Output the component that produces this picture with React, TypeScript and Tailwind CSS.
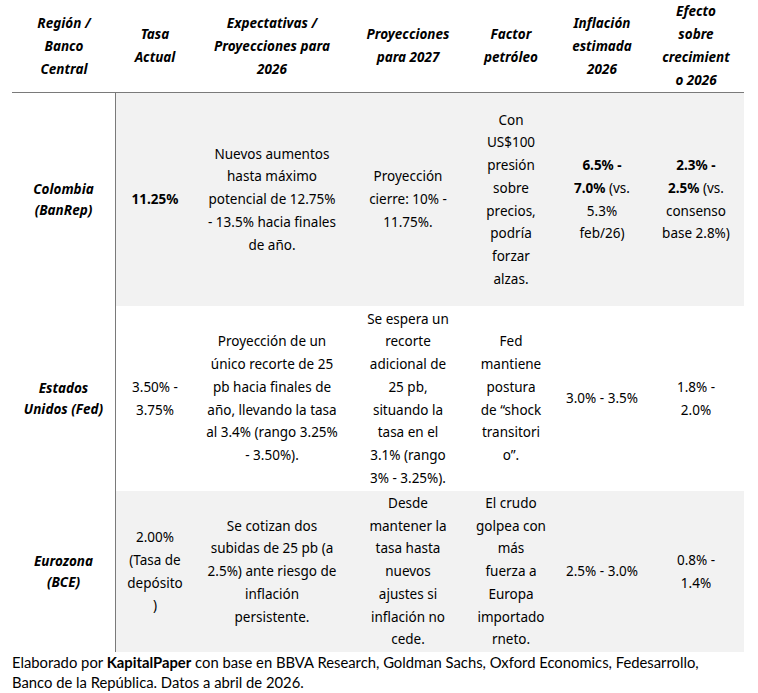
import React from "react";

type Cell = React.ReactNode[];

const header: Cell[] = [
  ["Región /", "Banco", "Central"],
  ["Tasa", "Actual"],
  ["Expectativas /", "Proyecciones para", "2026"],
  ["Proyecciones", "para 2027"],
  ["Factor", "petróleo"],
  ["Inflación", "estimada", "2026"],
  ["Efecto", "sobre", "crecimient", "o 2026"],
];

const rows: { region: string[]; cells: Cell[]; shaded: boolean; h: string }[] = [
  {
    region: ["Colombia", "(BanRep)"],
    shaded: true,
    h: "h-[213px]",
    cells: [
      [<b key="b">11.25%</b>],
      ["Nuevos aumentos", "hasta máximo", "potencial de 12.75%", "- 13.5% hacia finales", "de año."],
      ["Proyección", "cierre: 10% -", "11.75%."],
      ["Con", "US$100", "presión", "sobre", "precios,", "podría", "forzar", "alzas."],
      [
        <b key="b">6.5% -</b>,
        <>
          <b>7.0%</b> (vs.
        </>,
        "5.3%",
        "feb/26)",
      ],
      [
        <b key="b">2.3% -</b>,
        <>
          <b>2.5%</b> (vs.
        </>,
        "consenso",
        "base 2.8%)",
      ],
    ],
  },
  {
    region: ["Estados", "Unidos (Fed)"],
    shaded: false,
    h: "h-[185px]",
    cells: [
      ["3.50% -", "3.75%"],
      [
        "Proyección de un",
        "único recorte de 25",
        "pb hacia finales de",
        "año, llevando la tasa",
        "al 3.4% (rango 3.25%",
        "- 3.50%).",
      ],
      ["Se espera un", "recorte", "adicional de", "25 pb,", "situando la", "tasa en el", "3.1% (rango", "3% - 3.25%)."],
      ["Fed", "mantiene", "postura", "de “shock", "transitori", "o”."],
      ["3.0% - 3.5%"],
      ["1.8% -", "2.0%"],
    ],
  },
  {
    region: ["Eurozona", "(BCE)"],
    shaded: true,
    h: "h-[161px]",
    cells: [
      ["2.00%", "(Tasa de", "depósito", ")"],
      ["Se cotizan dos", "subidas de 25 pb (a", "2.5%) ante riesgo de", "inflación", "persistente."],
      ["Desde", "mantener la", "tasa hasta", "nuevos", "ajustes si", "inflación no", "cede."],
      ["El crudo", "golpea con", "más", "fuerza a", "Europa", "importado", "rneto."],
      ["2.5% - 3.0%"],
      ["0.8% -", "1.4%"],
    ],
  },
];

const cols = "grid grid-cols-[104px_78px_156px_116px_90px_92px_96px]";

const Lines = ({ lines }: { lines: React.ReactNode[] }) => (
  <div className="flex flex-col items-center text-center">
    {lines.map((l, i) => (
      <span key={i} className="whitespace-nowrap">
        {l}
      </span>
    ))}
  </div>
);

export default function App() {
  return (
    <div className="w-[758px] h-[693px] bg-white text-black overflow-hidden">
      <div className="ml-3 w-[732px] font-['Noto_Sans',sans-serif] text-[13.5px]">
        <div className={`${cols} h-[93px] border-b border-[#7a7a7a] font-bold italic leading-[23px]`}>
          {header.map((c, i) => (
            <div key={i} className="flex items-center justify-center">
              <Lines lines={c} />
            </div>
          ))}
        </div>
        {rows.map((r, ri) => (
          <div key={ri} className={`${cols} ${r.h} ${r.shaded ? "bg-[#f2f2f2]" : "bg-white"} leading-[22.7px]`}>
            <div className="flex items-center justify-center bg-white border-r border-[#7a7a7a] font-bold italic leading-[21px]">
              <Lines lines={r.region} />
            </div>
            {r.cells.map((c, ci) => (
              <div key={ci} className="flex items-center justify-center">
                <Lines lines={c} />
              </div>
            ))}
          </div>
        ))}
      </div>
      <p className="ml-3 mt-px font-['Lato',sans-serif] text-[14.8px] leading-[19.5px]">
        Elaborado por <b>KapitalPaper</b> con base en BBVA Research, Goldman Sachs, Oxford Economics, Fedesarrollo,
        <br />
        Banco de la República. Datos a abril de 2026.
      </p>
    </div>
  );
}
